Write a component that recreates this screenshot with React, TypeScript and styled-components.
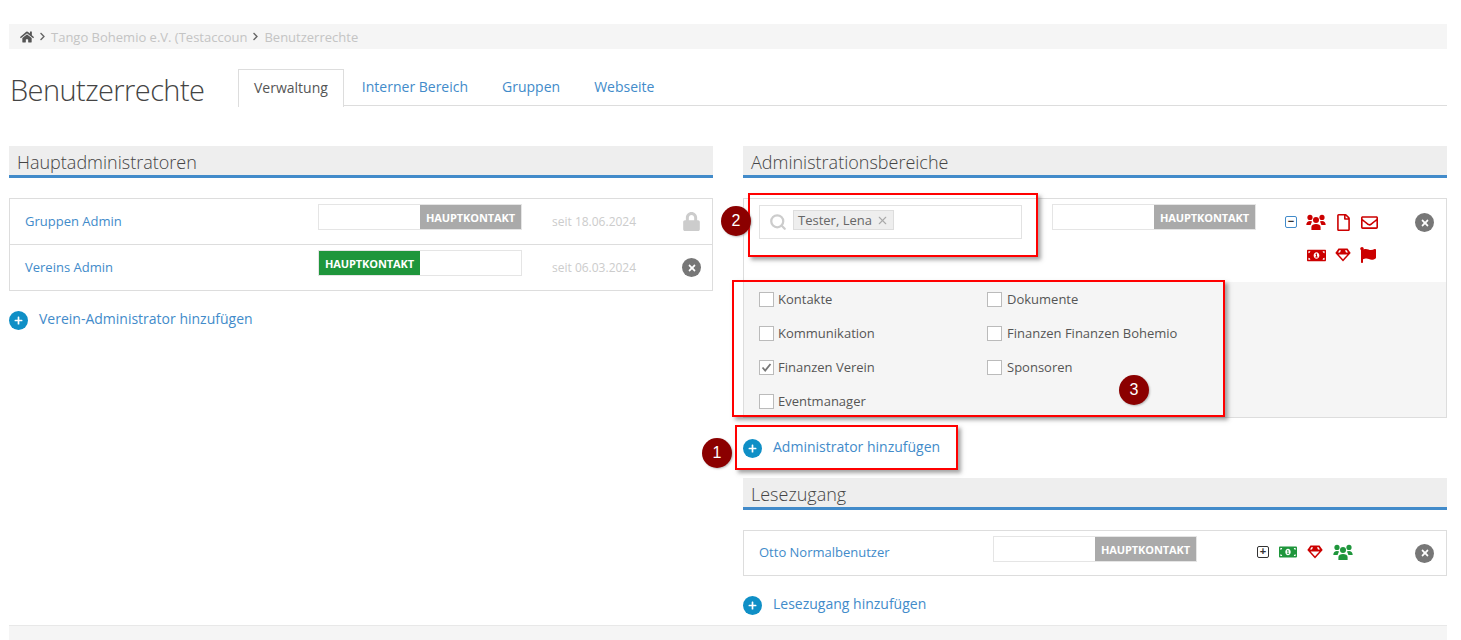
import { createGlobalStyle, styled } from 'styled-components';
import {
  FaChevronRight,
  FaFlag,
  FaHome,
  FaLock,
  FaMoneyBillAlt,
  FaPlus,
  FaRegEnvelope,
  FaRegFile,
  FaTimes,
} from 'react-icons/fa';
import { FiSearch, FiX } from 'react-icons/fi';

const GlobalStyle = createGlobalStyle`
  html, body {
    margin: 0;
    padding: 0;
    background: #fff;
    font-family: 'Open Sans', 'Liberation Sans', sans-serif;
    font-size: 13px;
    color: #555;
  }
`;

const Page = styled.div`
  position: relative;
  width: 1461px;
  height: 640px;
  overflow: hidden;
  box-sizing: border-box;
  padding: 24px 14px 0 9px;
`;

const Breadcrumb = styled.div`
  height: 25px;
  background: #f5f5f5;
  display: flex;
  align-items: center;
  padding-left: 11px;
  gap: 4px;
  color: #c4c4c4;
  font-size: 13px;
  svg.home {
    color: #555;
    font-size: 14px;
  }
  svg.sep {
    color: #666;
    font-size: 9px;
  }
`;

const TitleRow = styled.div`
  display: flex;
  align-items: flex-end;
  height: 57px;
`;

const Title = styled.h1`
  margin: 0 33px 0 0;
  box-sizing: border-box;
  width: 196px;
  padding-left: 1px;
  font-size: 29px;
  font-weight: 300;
  line-height: 42px;
  color: #444;
  letter-spacing: -0.57px;
  white-space: nowrap;
  position: relative;
  top: 5px;
`;

const Tabs = styled.div`
  flex: 1;
  display: flex;
  border-bottom: 1px solid #ddd;
  height: 36px;
`;

const Tab = styled.div<{ $active?: boolean }>`
  box-sizing: border-box;
  height: ${p => (p.$active ? 38 : 36)}px;
  padding: 0 ${p => (p.$active ? 15 : 16)}px 0 ${p => (p.$active ? 15 : 18)}px;
  line-height: 36px;
  font-size: 14px;
  color: ${p => (p.$active ? '#555' : '#428bca')};
  ${p => (p.$active ? 'background: #fff; border: 1px solid #ddd; border-bottom: 0;' : '')}
`;

const Columns = styled.div`
  display: grid;
  grid-template-columns: 704px 704px;
  gap: 30px;
  margin-top: 40px;
`;

const Column = styled.div`
  display: flex;
  flex-direction: column;
`;

const SectionHeader = styled.h2`
  margin: 0;
  box-sizing: border-box;
  height: 32px;
  background: #eee;
  border-bottom: 3px solid #428bca;
  padding-left: 8px;
  font-size: 18px;
  font-weight: 300;
  line-height: 33px;
  color: #444;
`;

const Card = styled.div`
  margin-top: 20px;
  border: 1px solid #ddd;
  background: #fff;
`;

const Row = styled.div<{ $columns: string; $height?: number }>`
  display: grid;
  grid-template-columns: ${p => p.$columns};
  height: ${p => p.$height ?? 45}px;
  align-items: center;
  padding-left: 15px;
  & + & {
    border-top: 1px solid #ddd;
  }
`;

const NameLink = styled.a`
  color: #428bca;
  font-size: 13px;
  padding-bottom: 2px;
`;

const ToggleBox = styled.div`
  box-sizing: border-box;
  width: 204px;
  height: 26px;
  border: 1px solid #e5e5e5;
  display: flex;
  align-self: start;
  margin-top: 5px;
  background: #fff;
`;

const ToggleLabel = styled.div<{ $on?: boolean }>`
  width: 101px;
  height: 24px;
  margin-left: ${p => (p.$on ? 0 : 'auto')};
  background: ${p => (p.$on ? '#1f963c' : '#aaa')};
  color: #fff;
  font-size: 11px;
  font-weight: 700;
  letter-spacing: -0.1px;
  line-height: 25px;
  text-align: center;
  white-space: nowrap;
`;

const DateText = styled.div`
  color: #ccc;
  font-size: 12px;
`;

const CloseButton = styled.div`
  width: 19px;
  height: 19px;
  border-radius: 50%;
  background: #777;
  color: #fff;
  font-size: 10px;
  display: flex;
  align-items: center;
  justify-content: center;
`;

const LockIcon = styled(FaLock)`
  color: #ccc;
  font-size: 19px;
`;

const AddLink = styled.a<{ $top: number }>`
  display: flex;
  align-items: center;
  gap: 11px;
  height: 20px;
  margin-top: ${p => p.$top}px;
  color: #428bca;
  font-size: 14px;
`;

const AddIcon = styled.span`
  width: 19px;
  height: 19px;
  border-radius: 50%;
  background: #0f8fc6;
  color: #fff;
  font-size: 9px;
  display: flex;
  align-items: center;
  justify-content: center;
  position: relative;
  top: 2px;
`;

const AdminTop = styled.div`
  display: grid;
  grid-template-columns: 263px 204px 99px 32px;
  column-gap: 30px;
  height: 83px;
  padding-left: 15px;
  box-sizing: border-box;
`;

const SearchBox = styled.div`
  box-sizing: border-box;
  width: 263px;
  height: 34px;
  margin-top: 6px;
  border: 1px solid #e2e2e2;
  display: flex;
  align-items: center;
  padding-left: 9px;
  gap: 6px;
  color: #ccc;
  font-size: 18px;
`;

const Tag = styled.span`
  box-sizing: border-box;
  height: 20px;
  padding: 0 4px;
  background: #eee;
  border: 1px solid #ddd;
  color: #666;
  font-size: 13px;
  line-height: 17px;
  display: flex;
  align-items: center;
  gap: 4px;
  position: relative;
  top: -2px;
  svg {
    color: #aaa;
    font-size: 13px;
  }
`;

const RightCell = styled.div`
  padding-top: 14px;
`;

const IconsBlock = styled.div`
  display: flex;
  flex-direction: column;
  margin-left: -1px;
`;

const IconLine = styled.div<{ $indent: number; $top: number; $gap: number }>`
  display: flex;
  align-items: center;
  gap: ${p => p.$gap}px;
  margin-left: ${p => p.$indent}px;
  margin-top: ${p => p.$top}px;
  height: 20px;
`;

const Perm = styled.span<{ $color: string; $size: number }>`
  color: ${p => p.$color};
  font-size: ${p => p.$size}px;
  line-height: 0;
  display: inline-flex;
`;

const SquareToggle = styled.span<{ $color: string }>`
  box-sizing: border-box;
  width: 12px;
  height: 12px;
  border: 1.5px solid ${p => p.$color};
  border-radius: 2px;
  color: #333;
  font-size: 11px;
  font-weight: 700;
  line-height: 9px;
  text-align: center;
  font-family: 'Liberation Sans', sans-serif;
`;

const Permissions = styled.div`
  height: 135px;
  box-sizing: border-box;
  background: #f5f5f5;
  padding: 7px 15px 0;
  display: grid;
  grid-template-columns: 228px 1fr;
  grid-auto-rows: 34px;
`;

const CheckRow = styled.label`
  display: flex;
  align-items: center;
  gap: 4px;
  height: 20px;
  color: #555;
  font-size: 13px;
  &:nth-child(even) {
    gap: 5px;
  }
`;

const CheckBox = styled.span`
  box-sizing: border-box;
  width: 15px;
  height: 15px;
  background: #fff;
  border: 1px solid #bbb;
  color: #777;
  display: flex;
  align-items: center;
  justify-content: center;
`;

const SectionGap = styled.div`
  height: 22px;
`;

const Footer = styled.div`
  position: absolute;
  left: 9px;
  right: 14px;
  top: 625px;
  bottom: 0;
  background: #f5f5f5;
  border-top: 1px solid #e8e8e8;
`;

const Callout = styled.div<{ $x: number; $y: number; $w: number; $h: number }>`
  position: absolute;
  box-sizing: border-box;
  left: ${p => p.$x}px;
  top: ${p => p.$y}px;
  width: ${p => p.$w}px;
  height: ${p => p.$h}px;
  border: 2px solid #f00;
  box-shadow: 3px 3px 4px rgba(90, 90, 90, 0.55);
`;

const Marker = styled.div<{ $x: number; $y: number }>`
  position: absolute;
  left: ${p => p.$x - 15}px;
  top: ${p => p.$y - 15}px;
  width: 30px;
  height: 30px;
  border-radius: 50%;
  background: #8b0000;
  color: #fff;
  font-family: 'Liberation Sans', sans-serif;
  font-size: 16px;
  line-height: 30px;
  text-align: center;
  box-shadow: 1px 1px 2px rgba(90, 90, 90, 0.4);
`;

const RED = '#cc0000';
const GREEN = '#1f963c';

function UsersIcon({ color }: { color: string }) {
  return (
    <svg width="20" height="17" viewBox="0 0 20 17" fill={color}>
      <circle cx="4" cy="3.4" r="2.6" />
      <circle cx="16" cy="3.4" r="2.6" />
      <circle cx="10" cy="6" r="3" />
      <path d="M0.3 11 C0.3 8 2 6.9 4 6.9 C5 6.9 5.6 7.2 6.1 7.6 C5.7 8.6 5 9.6 4.6 11 Z" />
      <path d="M19.7 11 C19.7 8 18 6.9 16 6.9 C15 6.9 14.4 7.2 13.9 7.6 C14.3 8.6 15 9.6 15.4 11 Z" />
      <path d="M5.4 16 V13 C5.4 10.8 7.5 9.9 10 9.9 C12.5 9.9 14.6 10.8 14.6 13 V16 Z" />
    </svg>
  );
}

function GemIcon({ color }: { color: string }) {
  return (
    <svg width="16" height="14" viewBox="0 0 16 14" fill={color}>
      <path d="M3.5 0.5 H12.5 L15.7 5 L8 13.6 L0.3 5 Z" />
      <path d="M3.6 6.6 H12.4 L8 11.3 Z" fill="#fff" />
      <path d="M4.4 2.2 H6 L5 4.6 H3 Z M10 2.2 H11.6 L13 4.6 H11 Z" fill="#fff" />
    </svg>
  );
}

function Toggle({ on }: { on?: boolean }) {
  return (
    <ToggleBox>
      <ToggleLabel $on={on}>HAUPTKONTAKT</ToggleLabel>
    </ToggleBox>
  );
}

function Close() {
  return (
    <CloseButton>
      <FaTimes />
    </CloseButton>
  );
}

function Add({ text, top }: { text: string; top: number }) {
  return (
    <AddLink $top={top}>
      <AddIcon>
        <FaPlus />
      </AddIcon>
      {text}
    </AddLink>
  );
}

function Check({ label, checked }: { label: string; checked?: boolean }) {
  return (
    <CheckRow>
      <CheckBox>
        {checked && (
          <svg width="11" height="11" viewBox="0 0 11 11">
            <path d="M1.5 5.5 L4.2 8.5 L9.5 2" fill="none" stroke="currentColor" strokeWidth="1.8" />
          </svg>
        )}
      </CheckBox>
      {label}
    </CheckRow>
  );
}

/** Benutzerrechte */
export default function App() {
  const mainColumns = '293px 204px 30px 130px 1fr';

  return (
    <Page>
      <GlobalStyle />
      <Breadcrumb>
        <FaHome className="home" />
        <FaChevronRight className="sep" />
        Tango Bohemio e.V. (Testaccoun
        <FaChevronRight className="sep" />
        Benutzerrechte
      </Breadcrumb>

      <TitleRow>
        <Title>Benutzerrechte</Title>
        <Tabs>
          <Tab $active>Verwaltung</Tab>
          <Tab>Interner Bereich</Tab>
          <Tab>Gruppen</Tab>
          <Tab>Webseite</Tab>
        </Tabs>
      </TitleRow>

      <Columns>
        <Column>
          <SectionHeader>Hauptadministratoren</SectionHeader>
          <Card>
            <Row $columns={mainColumns}>
              <NameLink>Gruppen Admin</NameLink>
              <Toggle />
              <span />
              <DateText>seit 18.06.2024</DateText>
              <LockIcon />
            </Row>
            <Row $columns={mainColumns}>
              <NameLink>Vereins Admin</NameLink>
              <Toggle on />
              <span />
              <DateText>seit 06.03.2024</DateText>
              <Close />
            </Row>
          </Card>
          <Add text="Verein-Administrator hinzufügen" top={17} />
        </Column>

        <Column>
          <SectionHeader>Administrationsbereiche</SectionHeader>
          <Card>
            <AdminTop>
              <SearchBox>
                <FiSearch strokeWidth={3} />
                <Tag>
                  Tester, Lena
                  <FiX />
                </Tag>
              </SearchBox>
              <Toggle />
              <IconsBlock>
                <IconLine $indent={0} $top={13} $gap={9}>
                  <SquareToggle $color="#428bca">−</SquareToggle>
                  <Perm $color={RED} $size={20}>
                    <UsersIcon color={RED} />
                  </Perm>
                  <Perm $color={RED} $size={17}>
                    <FaRegFile />
                  </Perm>
                  <Perm $color={RED} $size={17}>
                    <FaRegEnvelope />
                  </Perm>
                </IconLine>
                <IconLine $indent={22} $top={13} $gap={9}>
                  <Perm $color={RED} $size={19}>
                    <FaMoneyBillAlt />
                  </Perm>
                  <Perm $color={RED} $size={16}>
                    <GemIcon color={RED} />
                  </Perm>
                  <Perm $color={RED} $size={16}>
                    <FaFlag />
                  </Perm>
                </IconLine>
              </IconsBlock>
              <RightCell>
                <Close />
              </RightCell>
            </AdminTop>
            <Permissions>
              <Check label="Kontakte" />
              <Check label="Dokumente" />
              <Check label="Kommunikation" />
              <Check label="Finanzen Finanzen Bohemio" />
              <Check label="Finanzen Verein" checked />
              <Check label="Sponsoren" />
              <Check label="Eventmanager" />
            </Permissions>
          </Card>
          <Add text="Administrator hinzufügen" top={18} />
          <SectionGap />
          <SectionHeader>Lesezugang</SectionHeader>
          <Card>
            <Row $columns="234px 204px 61px 1fr 31px" $height={44}>
              <NameLink>Otto Normalbenutzer</NameLink>
              <Toggle />
              <span />
              <IconLine $indent={-1} $top={-2} $gap={10}>
                <SquareToggle $color="#333">+</SquareToggle>
                <Perm $color={GREEN} $size={18}>
                  <FaMoneyBillAlt />
                </Perm>
                <Perm $color={RED} $size={16}>
                  <GemIcon color={RED} />
                </Perm>
                <Perm $color={GREEN} $size={20}>
                  <UsersIcon color={GREEN} />
                </Perm>
              </IconLine>
              <Close />
            </Row>
          </Card>
          <Add text="Lesezugang hinzufügen" top={17} />
        </Column>
      </Columns>

      <Footer />

      <Callout $x={748} $y={193} $w={290} $h={64} />
      <Callout $x={732} $y={280} $w={493} $h={137} />
      <Callout $x={735} $y={425} $w={223} $h={45} />
      <Marker $x={736} $y={221}>2</Marker>
      <Marker $x={1134} $y={390}>3</Marker>
      <Marker $x={717} $y={453}>1</Marker>
    </Page>
  );
}
